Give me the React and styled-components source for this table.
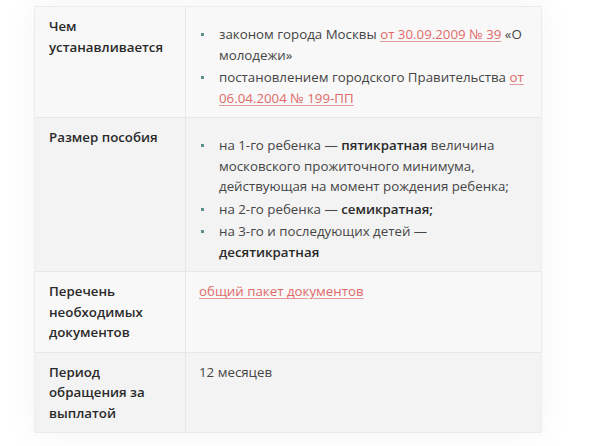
import React from 'react';
import styled, { createGlobalStyle } from 'styled-components';

const GlobalStyle = createGlobalStyle`
  body {
    margin: 0;
    background: #ffffff;
    font-family: "Open Sans", "Noto Sans", "DejaVu Sans", sans-serif;
  }
`;

const Page = styled.div`
  width: 600px;
  height: 446px;
  padding: 6px 0 0 34px;
  box-sizing: border-box;
`;

const Table = styled.table`
  width: 508px;
  border-collapse: collapse;
  table-layout: fixed;
  font-size: 13.3px;
  line-height: 20.5px;
  color: #454545;
  box-shadow: 0 0 28px rgba(120, 100, 100, 0.07);
  border: 1px solid #ececec;
`;

const Row = styled.tr`
  background: ${(p) => (p.$shaded ? '#f3f3f3' : '#f8f8f8')};
  border-bottom: 1px solid #e7e7e7;
  &:last-child {
    border-bottom: none;
  }
`;

const LabelCol = styled.col`
  width: 151px;
`;

const Label = styled.th`
  padding: 9px 10px 9px 14px;
  text-align: left;
  vertical-align: top;
  font-weight: 600;
  color: #2a2a2a;
  border-right: 1px solid #e7e7e7;
`;

const Value = styled.td`
  padding: 9px 14px 9px 13px;
  vertical-align: top;
`;

const List = styled.ul`
  list-style: none;
  margin: 8px 0 0;
  padding: 0 0 0 20px;
`;

const Item = styled.li`
  position: relative;
  & + & {
    margin-top: 2px;
  }
  &::before {
    content: '';
    position: absolute;
    left: -18px;
    top: 9px;
    width: 3px;
    height: 3px;
    background: #5f8f8c;
  }
`;

const DocLink = styled.a`
  color: #e06a6a;
  text-decoration: underline;
  text-decoration-color: #e59a9a;
  text-underline-offset: 2px;
`;

const Strong = styled.b`
  font-weight: 600;
  color: #2a2a2a;
`;

const App = () => (
  <Page>
    <GlobalStyle />
    <Table>
      <colgroup>
        <LabelCol />
        <col />
      </colgroup>
      <tbody>
        <Row>
          <Label>Чем устанавливается</Label>
          <Value>
            <List>
              <Item>
                законом города Москвы <DocLink href="#">от 30.09.2009 № 39</DocLink> «О молодежи»
              </Item>
              <Item>
                постановлением городского Правительства{' '}
                <DocLink href="#">от 06.04.2004 № 199-ПП</DocLink>
              </Item>
            </List>
          </Value>
        </Row>
        <Row $shaded>
          <Label>Размер пособия</Label>
          <Value>
            <List>
              <Item>
                на 1-го ребенка — <Strong>пятикратная</Strong> величина московского прожиточного
                минимума, действующая на момент рождения ребенка;
              </Item>
              <Item>
                на 2-го ребенка — <Strong>семикратная;</Strong>
              </Item>
              <Item>
                на 3-го и последующих детей — <Strong>десятикратная</Strong>
              </Item>
            </List>
          </Value>
        </Row>
        <Row>
          <Label>Перечень необходимых документов</Label>
          <Value>
            <DocLink href="#">общий пакет документов</DocLink>
          </Value>
        </Row>
        <Row $shaded>
          <Label>Период обращения за выплатой</Label>
          <Value>12 месяцев</Value>
        </Row>
      </tbody>
    </Table>
  </Page>
);

export default App;
